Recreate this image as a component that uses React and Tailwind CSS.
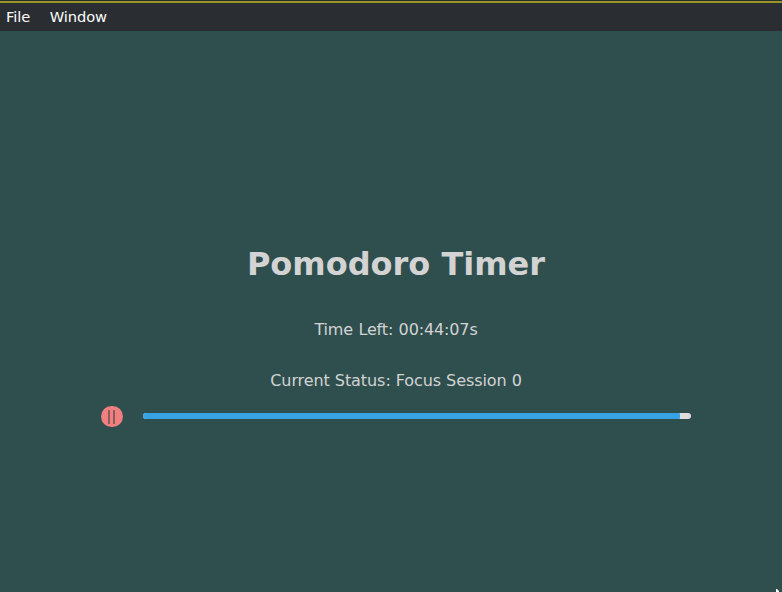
export default function App() {
  return (
    <div className="relative flex h-screen w-full flex-col overflow-hidden bg-[#2f4f4f] font-['DejaVu_Sans',sans-serif] text-[#d3d3d3]">
      <div className="h-[3px] shrink-0 border-t border-[#2a2e32] bg-[#9a9624]" />
      <nav className="flex h-7 shrink-0 items-center gap-5 bg-[#2a2e32] px-1.5 text-[14.67px] tracking-[-0.08px] text-[#fcfcfc]">
        <span>File</span>
        <span className="-ml-[0.5px]">Window</span>
      </nav>
      <main className="flex flex-1 flex-col items-center pt-[214px] pl-[10px]">
        <h1 className="text-[32px] leading-[38px] font-bold">Pomodoro Timer</h1>
        <p className="mt-[37px] text-base leading-5 tracking-[-0.13px] [word-spacing:0.4px]">Time Left: 00:44:07s</p>
        <p className="mt-[31px] text-base leading-5 tracking-[-0.07px]">Current Status: Focus Session 0</p>
        <div className="mt-[15px] flex w-[590px] items-start gap-5">
          <button className="flex h-[21px] w-[22px] items-center justify-center gap-[3px] rounded-full bg-[#f08080] pr-px">
            <span className="h-3.5 w-0.5 bg-[#8b5a5b]" />
            <span className="h-3.5 w-0.5 bg-[#8b5a5b]" />
          </button>
          <div className="mt-[7px] h-1.5 w-[548px] overflow-hidden rounded-full bg-[#dfdcd9]">
            <div className="h-full w-[537px] rounded-r-[1px] bg-[#36a3e3]" />
          </div>
        </div>
      </main>
      <svg className="absolute right-[3px] bottom-0 h-[3px] w-[3px]" viewBox="0 0 3 3">
        <path d="M0 0H1L3 2V3H0Z" fill="#fff" />
      </svg>
    </div>
  );
}
